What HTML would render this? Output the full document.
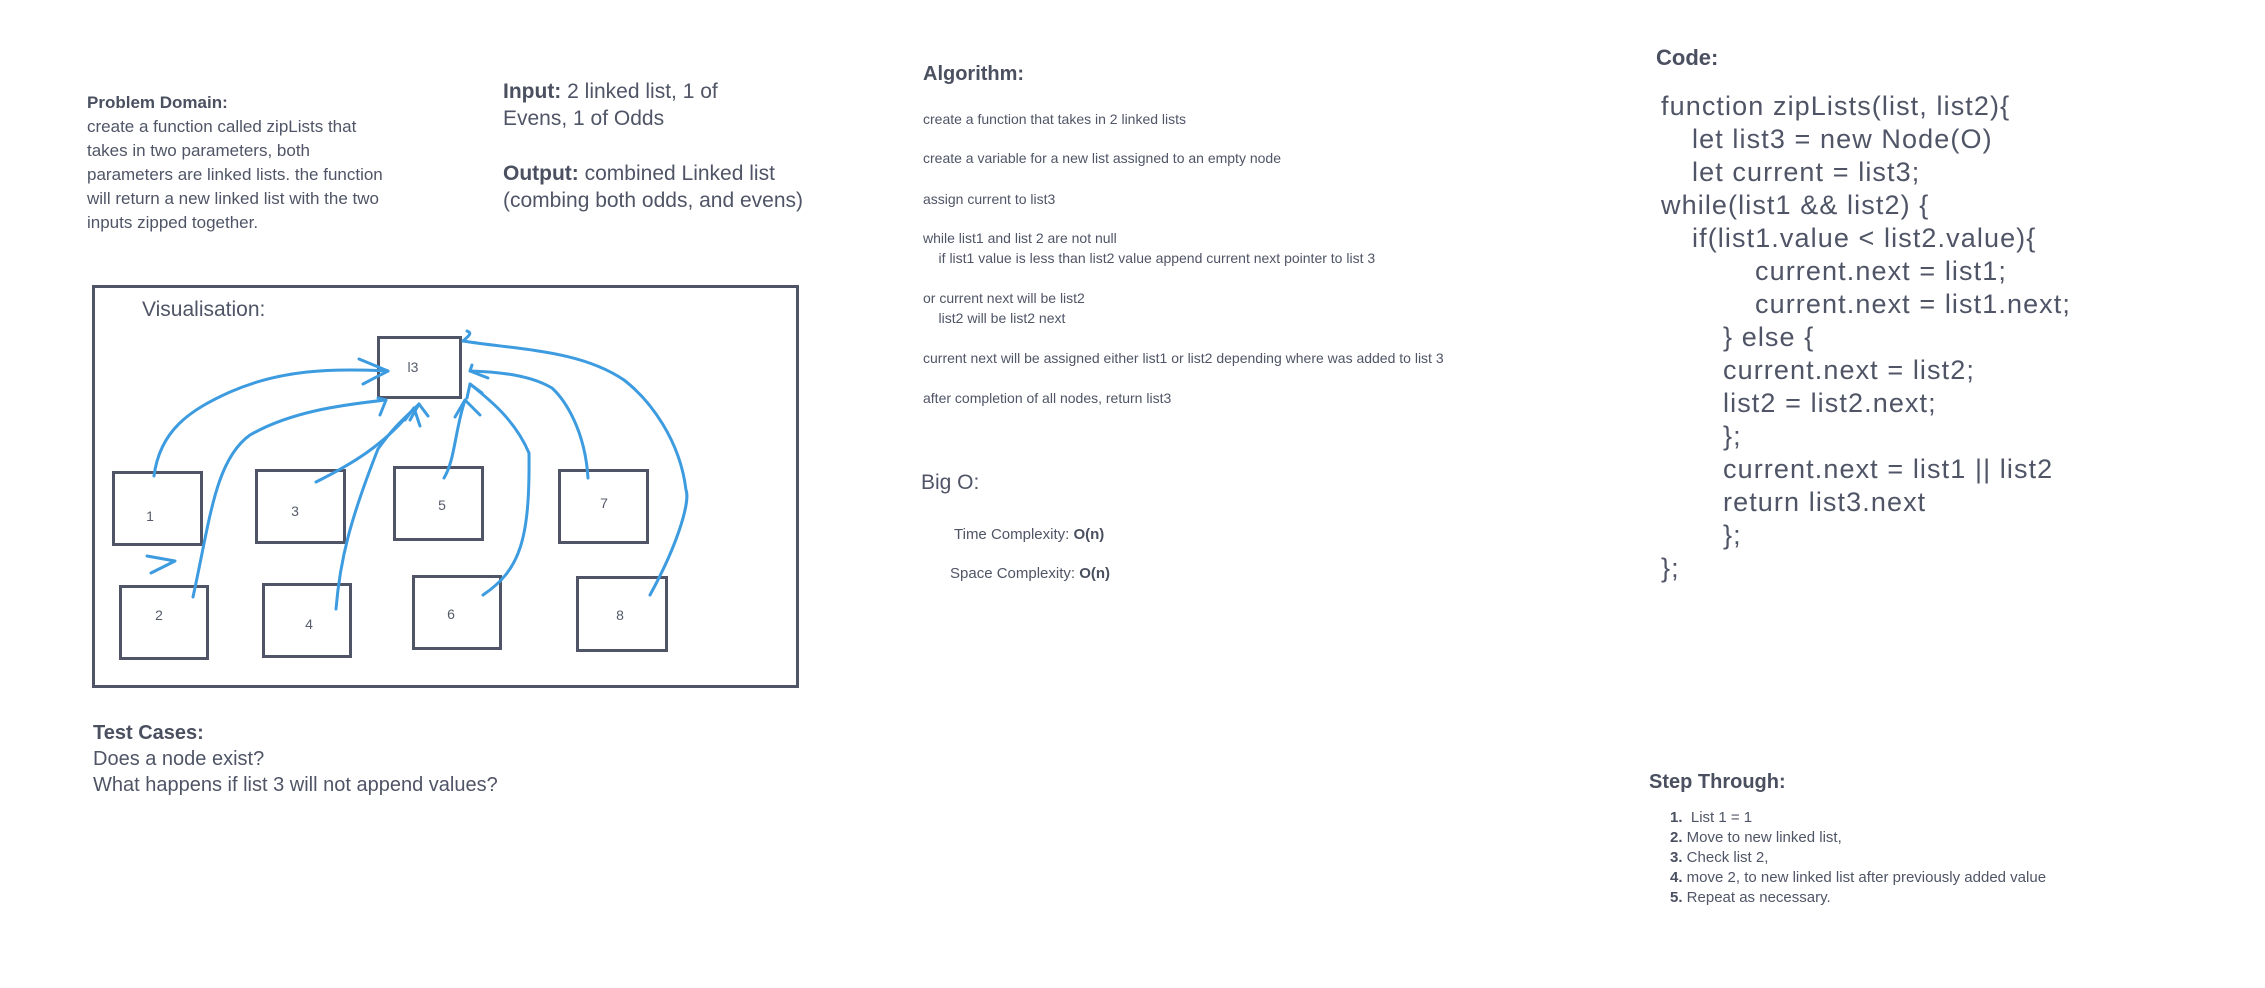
<!DOCTYPE html>
<html><head><meta charset="utf-8"><style>
html,body{margin:0;padding:0;background:#fff;}
body{width:2265px;height:988px;position:relative;overflow:hidden;font-family:"Liberation Sans",sans-serif;color:#4f5566;}
.a{position:absolute;white-space:nowrap;}
b{font-weight:bold;color:#4a5060;}
.box{position:absolute;border:3px solid #4f5566;box-sizing:border-box;}
.lbl{position:absolute;font-size:14px;color:#555b6a;transform:translate(-50%,-50%);}
</style></head><body>

<div class="a" style="left:87px;top:91px;font-size:17px;line-height:24px;">
<b>Problem Domain:</b><br>create a function called zipLists that<br>takes in two parameters, both<br>parameters are linked lists. the function<br>will return a new linked list with the two<br>inputs zipped together.</div>

<div class="a" style="left:503px;top:78px;font-size:21px;line-height:27px;"><b>Input:</b> 2 linked list, 1 of<br>Evens, 1 of Odds</div>
<div class="a" style="left:503px;top:160px;font-size:21px;line-height:27px;"><b>Output:</b> combined Linked list<br>(combing both odds, and evens)</div>

<div class="box" style="left:92px;top:285px;width:707px;height:403px;"></div>
<div class="a" style="left:142px;top:298px;font-size:21px;">Visualisation:</div>

<div class="box" style="left:377px;top:336px;width:85px;height:63px;"></div>
<div class="box" style="left:112px;top:471px;width:91px;height:75px;"></div>
<div class="box" style="left:255px;top:469px;width:91px;height:75px;"></div>
<div class="box" style="left:393px;top:466px;width:91px;height:75px;"></div>
<div class="box" style="left:558px;top:469px;width:91px;height:75px;"></div>
<div class="box" style="left:119px;top:585px;width:90px;height:75px;"></div>
<div class="box" style="left:262px;top:583px;width:90px;height:75px;"></div>
<div class="box" style="left:412px;top:575px;width:90px;height:75px;"></div>
<div class="box" style="left:576px;top:576px;width:92px;height:76px;"></div>
<div class="lbl" style="left:413px;top:367px;">l3</div>
<div class="lbl" style="left:150px;top:516px;">1</div>
<div class="lbl" style="left:295px;top:511px;">3</div>
<div class="lbl" style="left:442px;top:505px;">5</div>
<div class="lbl" style="left:604px;top:503px;">7</div>
<div class="lbl" style="left:159px;top:615px;">2</div>
<div class="lbl" style="left:309px;top:624px;">4</div>
<div class="lbl" style="left:451px;top:614px;">6</div>
<div class="lbl" style="left:620px;top:615px;">8</div>

<svg class="a" style="left:0;top:0" width="900" height="720" fill="none" stroke="#3d9be0" stroke-width="3" stroke-linecap="round" stroke-linejoin="round">
<path d="M154 476 C160 430 190 410 230 392 C280 370 330 368 388 371"/>
<path d="M359 359 L388 371 L363 384"/>
<path d="M193 597 C210 520 215 460 250 435 C290 412 340 405 386 400"/>
<path d="M378 398 L386 400 L380 415"/>
<path d="M316 482 C350 465 385 445 414 408"/>
<path d="M405 420 L414 408 L420 426"/>
<path d="M336 609 C340 560 350 520 378 449 C395 425 405 418 419 404"/>
<path d="M410 420 L419 404 L428 416"/>
<path d="M444 478 C455 460 455 430 465 400"/>
<path d="M455 417 L465 400 L480 415"/>
<path d="M483 595 C520 570 530 540 529 453 C515 420 490 400 470 384"/>
<path d="M467 398 L470 384 L482 393"/>
<path d="M588 478 C585 430 565 400 552 388 C530 375 500 372 470 371"/>
<path d="M472 365 L470 371 L488 378"/>
<path d="M650 595 C680 540 690 500 686 490 C680 440 650 400 624 380 C580 350 520 350 463 341"/>
<path d="M463 341 C470 335 472 333 467 331"/>
<path d="M147 556 L175 561 L151 573"/>
</svg>

<div class="a" style="left:93px;top:720px;font-size:20px;line-height:26px;"><b>Test Cases:</b><br>Does a node exist?<br>What happens if list 3 will not append values?</div>

<div class="a" style="left:923px;top:63px;font-size:20px;"><b>Algorithm:</b></div>
<div class="a" style="left:923px;top:109px;font-size:14px;line-height:20px;">create a function that takes in 2 linked lists</div>
<div class="a" style="left:923px;top:148px;font-size:14px;line-height:20px;">create a variable for a new list assigned to an empty node</div>
<div class="a" style="left:923px;top:189px;font-size:14px;line-height:20px;">assign current to list3</div>
<div class="a" style="left:923px;top:228px;font-size:14px;line-height:20px;">while list1 and list 2 are not null<br>&nbsp;&nbsp;&nbsp;&nbsp;if list1 value is less than list2 value append current next pointer to list 3</div>
<div class="a" style="left:923px;top:288px;font-size:14px;line-height:20px;">or current next will be list2<br>&nbsp;&nbsp;&nbsp;&nbsp;list2 will be list2 next</div>
<div class="a" style="left:923px;top:348px;font-size:14px;line-height:20px;">current next will be assigned either list1 or list2 depending where was added to list 3</div>
<div class="a" style="left:923px;top:388px;font-size:14px;line-height:20px;">after completion of all nodes, return list3</div>

<div class="a" style="left:921px;top:471px;font-size:21px;">Big O:</div>
<div class="a" style="left:954px;top:526px;font-size:15px;">Time Complexity: <b>O(n)</b></div>
<div class="a" style="left:950px;top:565px;font-size:15px;">Space Complexity: <b>O(n)</b></div>

<div class="a" style="left:1656px;top:45px;font-size:22px;"><b>Code:</b></div>
<div class="a" style="left:1661px;top:90px;font-size:27px;letter-spacing:1.1px;line-height:33px;">function zipLists(list, list2){<br>
<span style="padding-left:31px">let list3 = new Node(O)</span><br>
<span style="padding-left:31px">let current = list3;</span><br>
while(list1 &amp;&amp; list2) {<br>
<span style="padding-left:31px">if(list1.value &lt; list2.value){</span><br>
<span style="padding-left:94px">current.next = list1;</span><br>
<span style="padding-left:94px">current.next = list1.next;</span><br>
<span style="padding-left:62px">} else {</span><br>
<span style="padding-left:62px">current.next = list2;</span><br>
<span style="padding-left:62px">list2 = list2.next;</span><br>
<span style="padding-left:62px">};</span><br>
<span style="padding-left:62px">current.next = list1 || list2</span><br>
<span style="padding-left:62px">return list3.next</span><br>
<span style="padding-left:62px">};</span><br>
};</div>

<div class="a" style="left:1649px;top:771px;font-size:20px;"><b>Step Through:</b></div>
<div class="a" style="left:1670px;top:808px;font-size:15px;line-height:20px;">
<b>1.</b>&nbsp;&nbsp;List 1 = 1<br><b>2.</b> Move to new linked list,<br><b>3.</b> Check list 2,<br><b>4.</b> move 2, to new linked list after previously added value<br><b>5.</b> Repeat as necessary.</div>

</body></html>
